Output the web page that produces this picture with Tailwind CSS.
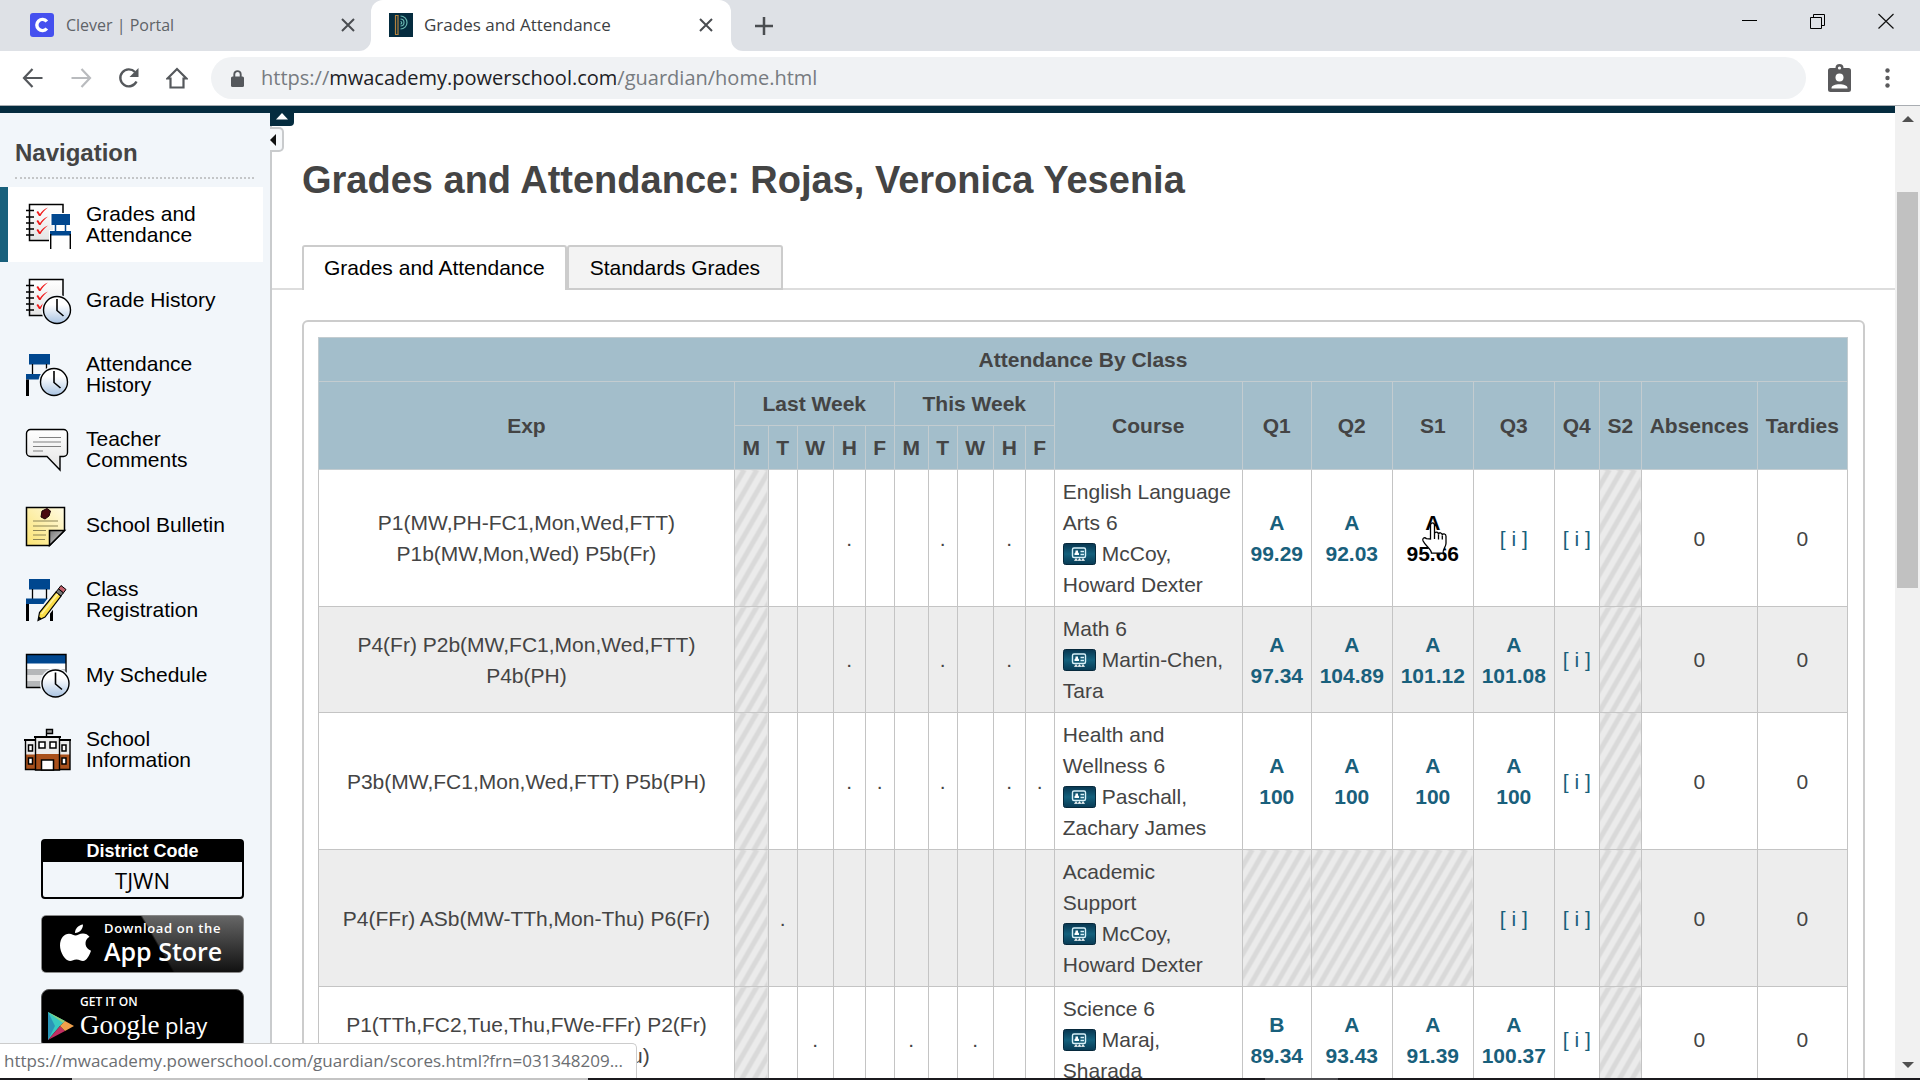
<!DOCTYPE html>
<html lang="en">
<head>
<meta charset="utf-8">
<title>Grades and Attendance</title>
<script src="https://cdn.jsdelivr.net/npm/@tailwindcss/browser@4"></script>
</head>
<body class="flex h-screen flex-col overflow-hidden bg-white font-['Liberation_Sans',Arial,sans-serif] text-[21px] text-[#444]">

<svg class="absolute size-0" aria-hidden="true">
  <defs>
    <linearGradient id="face" x1="0" y1="0" x2="0" y2="1"><stop offset=".3" stop-color="#fff"/><stop offset="1" stop-color="#a9c3e2"/></linearGradient>
    <linearGradient id="paper" x1="0" y1="0" x2="0" y2="1"><stop offset="0" stop-color="#fff"/><stop offset="1" stop-color="#e4e4e4"/></linearGradient>
    <linearGradient id="note" x1="1" y1="0" x2="0" y2="1"><stop offset="0" stop-color="#fffbe4"/><stop offset="1" stop-color="#fbe372"/></linearGradient>
    <linearGradient id="curl" x1="0" y1="0" x2="1" y2="1"><stop offset="0" stop-color="#777"/><stop offset="1" stop-color="#ddd"/></linearGradient>
    <linearGradient id="badge" x1="0" y1="0" x2="0" y2="1"><stop offset="0" stop-color="#083650"/><stop offset=".5" stop-color="#14607c"/><stop offset="1" stop-color="#083a54"/></linearGradient>
    <symbol id="clock" viewBox="0 0 32 32">
      <circle cx="16" cy="16" r="15.5" fill="#f2f6fa"/>
      <circle cx="16" cy="16" r="13.5" fill="url(#face)" stroke="#000" stroke-width="1.4"/>
      <path d="M16 5v11.500l6.500 5.500" fill="none" stroke="#000" stroke-width="1.600"/>
    </symbol>
    <symbol id="notebook" viewBox="0 0 48 50">
      <path d="M5.500 4.500h33.500v36h-33.500z" fill="url(#paper)" stroke="#000" stroke-width="1.500"/>
      <path d="M2 10.500h8M2 17h8M2 23h8M2 29h8M2 35h8" stroke="#000" stroke-width="1.500"/>
      <path id="ck" d="M12.500 12l1.500-1 2 3c2-3 4-5 8-6.500-3.500 2.500-5.500 5-7.500 8.500h-1.500z" fill="#f01818"/>
      <use href="#ck" y="9"/><use href="#ck" y="18"/>
    </symbol>
    <symbol id="portrait" viewBox="0 0 33 22">
      <rect x=".5" y=".5" width="32" height="21" rx="2" fill="url(#badge)" stroke="#06293c"/>
      <rect x="9.500" y="5" width="13" height="9.500" rx="1.500" fill="none" stroke="#d9f2fa" stroke-width="1.400"/>
      <path d="M11.500 12v-1.500l1-1.200v-1.800h2.500v1.800l1 1.200v1.500z" fill="#fff"/>
      <path d="M17.500 8.500h3.500M17.500 11.500h3.500" stroke="#d9f2fa" stroke-width="1.400"/>
      <path d="M11.500 17.500l1.500-2 1.500 2zM15 17.500l1.500-2 1.500 2zM18.500 17.500l1.500-2 1.500 2z" fill="#fff" stroke="#fff" stroke-width=".6"/>
    </symbol>
  </defs>
</svg>

<!-- Tab strip -->
<header class="shrink-0 font-['Open_Sans','Noto_Sans',sans-serif]">
  <div class="flex h-[51px] items-stretch bg-[#dee1e6]">
    <div class="flex w-[371px] items-center pb-[2px] pl-[30px] pr-[13px] text-[16px] text-[#5f6368]">
      <svg class="size-6" viewBox="0 0 24 24"><rect width="24" height="24" rx="3" fill="#4550ef"/><path d="M16.800 8.500A5.600 5.600 0 1 0 16.800 15.500" fill="none" stroke="#fff" stroke-width="3.400"/></svg>
      <span class="ml-3 flex-1">Clever | Portal</span>
      <button class="p-[3px]" aria-label="Close tab"><svg class="size-[14px]" viewBox="0 0 14 14"><path d="M1 1l12 12M13 1L1 13" stroke="#4a4d51" stroke-width="2"/></svg></button>
    </div>
    <div class="relative flex w-[360px] items-center rounded-t-xl bg-white pb-[2px] pl-[18px] pr-[15px] text-[17px] text-[#3c4043]">
      <svg class="absolute -left-3 bottom-0 size-3" viewBox="0 0 12 12"><path d="M12 0v12H0A12 12 0 0 0 12 0z" fill="#fff"/></svg>
      <svg class="absolute -right-3 bottom-0 size-3" viewBox="0 0 12 12"><path d="M0 0v12h12A12 12 0 0 1 0 0z" fill="#fff"/></svg>
      <svg class="size-6" viewBox="0 0 24 24"><path d="M0 0h24v24H0z" fill="#052c3f"/><path d="M6.500 2.500v19M9 21.500v-19" stroke="#b3813d" stroke-width="1.200"/><path d="M6 2.500h3.500M6 21.500h3.500" stroke="#b3813d"/><path d="M11.500 3a6.500 6.500 0 0 1 0 13M11.500 6a3.500 3.500 0 0 1 0 7M11.500 8.500a1.200 1.200 0 0 1 0 2.500" fill="none" stroke="#69b7b0" stroke-width="1.200"/></svg>
      <span class="ml-[11px] flex-1 whitespace-nowrap">Grades and Attendance</span>
      <button class="p-[3px]" aria-label="Close tab"><svg class="size-[14px]" viewBox="0 0 14 14"><path d="M1 1l12 12M13 1L1 13" stroke="#4a4d51" stroke-width="2"/></svg></button>
    </div>
    <button class="ml-6 self-center" aria-label="New tab"><svg class="size-[18px]" viewBox="0 0 18 18"><path d="M9 0v18M0 9h18" stroke="#4a4d51" stroke-width="2.500"/></svg></button>
    <div class="ml-auto flex items-start gap-[52px] pr-[26px] pt-[13px]">
      <button aria-label="Minimize"><svg class="size-4" viewBox="0 0 16 16"><path d="M0 7.500h15" stroke="#000"/></svg></button>
      <button aria-label="Restore"><svg class="size-4" viewBox="0 0 16 16"><path d="M.5 4.500h11v11H.5zM3.500 4V1.500h11v11H12" fill="none" stroke="#000"/></svg></button>
      <button aria-label="Close window"><svg class="size-4" viewBox="0 0 16 16"><path d="M.5 1l15 14.500M15.500 1l-15 14.500" stroke="#111" stroke-width="1.200"/></svg></button>
    </div>
  </div>
  <div class="flex h-[55px] items-center border-b border-[#a9adb2] pl-[22px] pr-[30px]">
    <button aria-label="Back"><svg class="size-[22px]" viewBox="0 0 22 22"><path d="M20.500 11H2.500M10.500 2L2 11l8.500 9" fill="none" stroke="#55585c" stroke-width="2.200"/></svg></button>
    <button class="ml-[26px]" aria-label="Forward"><svg class="size-[22px]" viewBox="0 0 22 22"><path d="M1.500 11h18M11.500 2l8.500 9-8.500 9" fill="none" stroke="#b9bbbe" stroke-width="2.200"/></svg></button>
    <button class="ml-[26px]" aria-label="Reload"><svg class="size-[22px]" viewBox="0 0 22 22"><path d="M18.500 14.500A8.500 8.500 0 1 1 17 5" fill="none" stroke="#55585c" stroke-width="2.400"/><path d="M20.500 1v9h-9z" fill="#55585c"/></svg></button>
    <button class="ml-[26px]" aria-label="Home"><svg class="size-[22px]" viewBox="0 0 22 22"><path d="M1.500 11.500L11 2l9.500 9.500H17.500V20.500h-13v-9z" fill="none" stroke="#55585c" stroke-width="2.200"/></svg></button>
    <div class="ml-[23px] flex h-[42px] flex-1 items-center rounded-full bg-[#f0f2f4] pl-[20px] text-[20px]">
      <svg class="h-[17px] w-[13px]" viewBox="0 0 13 17"><path d="M3.300 7V4.300a3.200 3.200 0 0 1 6.400 0V7" fill="none" stroke="#55585c" stroke-width="1.900"/><rect y="6.500" width="13" height="10.500" rx="1.500" fill="#55585c"/></svg>
      <span role="textbox" aria-label="Address" contenteditable="true" class="ml-[17px] whitespace-nowrap text-[#777b80]">https://<span class="text-[#202124]">mwacademy.powerschool.com</span>/guardian/home.html</span>
    </div>
    <button class="ml-[22px]" aria-label="Profile"><svg class="h-7 w-[23px]" viewBox="0 0 23 28"><path d="M2.500 4H20.500a2.500 2.500 0 0 1 2.500 2.500v19a2.500 2.500 0 0 1-2.500 2.500H2.500A2.500 2.500 0 0 1 0 25.500v-19A2.500 2.500 0 0 1 2.500 4z" fill="#5a5a5c"/><circle cx="11.500" cy="4" r="4" fill="#5a5a5c"/><circle cx="11.500" cy="4" r="1.600" fill="#fff"/><circle cx="11.500" cy="13.500" r="4" fill="#fff"/><path d="M3.500 24c0-5 16-5 16 0v.5h-16z" fill="#fff"/></svg></button>
    <button class="ml-[34px]" aria-label="Menu"><svg class="h-5 w-[5px]" viewBox="0 0 5 20"><g fill="#5a5a5c"><circle cx="2.500" cy="2.500" r="2.200"/><circle cx="2.500" cy="10" r="2.200"/><circle cx="2.500" cy="17.500" r="2.200"/></g></svg></button>
  </div>
</header>

<div class="flex min-h-0 flex-1">
  <div class="relative flex min-w-0 flex-1 flex-col overflow-hidden">
    <div class="h-[7px] shrink-0 bg-[#052c3f]"></div>
    <div class="flex min-h-0 flex-1">

      <!-- Sidebar -->
      <nav class="relative w-[272px] shrink-0 border-r-2 border-[#c9cbcd] bg-[#f2f6fa] text-black">
        <h2 class="ml-[15px] mr-4 mt-[25px] border-b-2 border-dotted border-[#c4c6c8] pb-[9px] text-[24px] leading-[30px] font-bold text-[#444]">Navigation</h2>
        <ul class="mt-2 leading-[21px]">
          <li><a href="#" aria-current="page" class="mr-[7px] flex h-[75px] items-center border-l-8 border-[#19607c] bg-white pl-4 pr-14">
            <svg class="h-[50px] w-12 shrink-0" viewBox="0 0 48 50"><use href="#notebook"/><path d="M26 13h22v12h-1v5h1v20H25V30h4v-5h-3z" fill="#fff"/><path d="M27.500 14h18.500v11H27.500z" fill="#00478f"/><path d="M31.500 25v6M41.500 25v6" stroke="#00478f" stroke-width="1.500"/><path d="M26 31h21v4.500H26z" fill="#00478f"/><path d="M26.700 34v15M46.300 34v15" stroke="#000" stroke-width="1.400"/></svg>
            <span class="ml-[14px] pb-[2px]">Grades and Attendance</span></a></li>
          <li><a href="#" class="flex h-[75px] items-center pl-6 pr-6">
            <svg class="h-[50px] w-12 shrink-0" viewBox="0 0 48 50"><use href="#notebook"/><use href="#clock" x="17" y="19" width="32" height="32"/></svg>
            <span class="ml-[14px]">Grade History</span></a></li>
          <li><a href="#" class="flex h-[75px] items-center pl-6 pr-14">
            <svg class="h-[50px] w-12 shrink-0" viewBox="0 0 48 50"><path d="M5 4h21v10.500H5z" fill="#00478f"/><path d="M8.500 14v10M22.500 14v10" stroke="#000" stroke-width="1.300"/><path d="M2 24h18v5.500H2z" fill="#00478f"/><path d="M2 29.500h3V46H2z"/><use href="#clock" x="14" y="16" width="32" height="32"/></svg>
            <span class="ml-[14px] pb-[2px]">Attendance History</span></a></li>
          <li><a href="#" class="flex h-[75px] items-center pl-6 pr-14">
            <svg class="h-[50px] w-12 shrink-0" viewBox="0 0 48 50"><path d="M6.500 4.500h33a4 4 0 0 1 4 4v19a4 4 0 0 1-4 4h-3.500V45L23 31.500H6.500a4 4 0 0 1-4-4v-19a4 4 0 0 1 4-4z" fill="url(#paper)" stroke="#000" stroke-width="1.400"/><path d="M15 12.500h22M9 17h28M9 21.500h28M9 26h10" stroke="#808080" stroke-width="1.200"/></svg>
            <span class="ml-[14px] pb-[2px]">Teacher Comments</span></a></li>
          <li><a href="#" class="flex h-[75px] items-center pl-6 pr-6">
            <svg class="h-[50px] w-12 shrink-0" viewBox="0 0 48 50"><path d="M2.500 7.500h38v23l-15 15h-23z" fill="url(#note)" stroke="#000" stroke-width="1.500"/><path d="M25.500 45.500v-15h15z" fill="url(#curl)" stroke="#000" stroke-width="1.500"/><path d="M9 21h25M9 26h25M9 30.500h13M9 35h13M9 39.500h12" stroke="#8c8455" stroke-width="1.200"/><path d="M18 11l5-2.500 3.500 2.500-1.500 5-4 3-4-2z" fill="#4a0a10" stroke="#1c0306"/></svg>
            <span class="ml-[14px]">School Bulletin</span></a></li>
          <li><a href="#" class="flex h-[75px] items-center pl-6 pr-14">
            <svg class="h-[50px] w-12 shrink-0" viewBox="0 0 48 50"><path d="M5 4h21v10.500H5z" fill="#00478f"/><path d="M8.500 14v10M22.500 14v10" stroke="#000" stroke-width="1.300"/><path d="M2 23.500h22v5.500H2z" fill="#00478f"/><path d="M2 29h3v17H2zM26 29h3v17h-3z"/><path d="M14 45.500l1.500-8L31 17l6 4-16 21z" fill="#fadc45" stroke="#f2f6fa" stroke-width="4"/><path d="M14 45.500l1.500-8L32 17l5 4-16 21z" fill="#fadc45" stroke="#000" stroke-width="1.200"/><path d="M17.500 39L34 18.500" stroke="#fff2a0" stroke-width="1.500"/><path d="M14 45.500l.8-4 3 2z"/><path d="M32 17l2.500-3.200 5 4L37 21z" fill="#777" stroke="#000"/><path d="M34.500 13.800l2.500-3.300 5 4-2.500 3.300z" fill="#c4616d" stroke="#000"/></svg>
            <span class="ml-[14px] pb-[2px]">Class Registration</span></a></li>
          <li><a href="#" class="flex h-[75px] items-center pl-6 pr-6">
            <svg class="h-[50px] w-12 shrink-0" viewBox="0 0 48 50"><path d="M2.500 4.500h39.500v33H2.500z" fill="#fff"/><path d="M3 19h38v6H3zM3 31h38v6H3z" fill="#b5b7b9"/><path d="M3 25h38v6H3z" fill="#e8e8e8"/><path d="M3 5h39v8.500H3z" fill="#00478f"/><path d="M2.500 4.500h39.500v33H2.500z" fill="none" stroke="#000" stroke-width="1.400"/><use href="#clock" x="15.500" y="17.500" width="32" height="32"/></svg>
            <span class="ml-[14px]">My Schedule</span></a></li>
          <li><a href="#" class="flex h-[75px] items-center pl-6 pr-14">
            <svg class="h-[50px] w-12 shrink-0" viewBox="0 0 48 50"><path d="M22.500 12V4.500h6v4h-6" fill="#999" stroke="#000" stroke-width="1.400"/><path d="M1.500 15h44.500v29.500H1.500z" fill="#ececec"/><path d="M1.500 29.500h44.500v15H1.500z" fill="#a9511c"/><path d="M1.500 15h44.500v29.500H1.500z" fill="none" stroke="#000" stroke-width="1.400"/><path d="M11.500 12h24v33h-24z" fill="#ececec"/><path d="M11.500 29h24v16h-24z" fill="#a9511c"/><path d="M11.500 12h24v33h-24z" fill="none" stroke="#000" stroke-width="1.400"/><path d="M10 12h27M0 15h11M36 15h11" stroke="#000" stroke-width="2"/><g fill="#fff" stroke="#000" stroke-width="1.500"><path d="M15 17h6v6h-6zM26 17h6v6h-6zM4.500 20h4v6h-4zM38 20h4v6h-4zM4.500 33h4v6h-4zM38 33h4v6h-4zM17.500 35h12v10h-12z"/></g></svg>
            <span class="ml-[14px] pb-[2px]">School Information</span></a></li>
        </ul>
        <div class="mt-[52px] flex flex-col gap-4 pl-[41px] pr-[26px]">
          <div class="h-[60px] rounded-[4px] border-2 border-black text-center">
            <div class="bg-black text-[18px] leading-[21px] font-bold text-white">District Code</div>
            <div class="font-['Open_Sans',sans-serif] text-[22px] leading-[36px]">TJWN</div>
          </div>
          <a href="#" class="flex h-[58px] items-center rounded-[5px] border border-[#8a8a8a] bg-[linear-gradient(60deg,#000_56%,transparent_57%),linear-gradient(#666,#111)] pl-[17px] font-['Open_Sans',sans-serif] text-white">
            <svg class="h-10 w-8 shrink-0" viewBox="0 0 32 40"><path d="M16.500 11.500c2 0 4-2 7.500-2 2.500 0 5 1.200 6.500 3.300-6 3.500-5 11.500 1.500 14-1.500 4.500-4.500 10.200-8 10.200-2.500 0-3.500-1.500-6.500-1.500s-4 1.500-6.500 1.500C6 37 1 28 1 21.500 1 14 5.500 9.700 10 9.700c3 0 5 1.800 6.500 1.800z" fill="#fff"/><path d="M16 9c0-4.500 3.500-8 8-8.500 0 4.500-3.500 8.500-8 8.500z" fill="#fff"/></svg>
            <span class="ml-[13px] whitespace-nowrap"><span class="block text-[13px] leading-[14px] font-semibold tracking-wider">Download on the</span><span class="block text-[25px] leading-[32px] font-semibold">App Store</span></span>
          </a>
          <a href="#" class="flex h-[60px] rounded-[8px] border border-[#555] bg-black pl-[6px] pt-[5px] font-['Open_Sans',sans-serif] text-white">
            <svg class="mt-[17px] h-7 w-[26px] shrink-0" viewBox="0 0 26 28"><path d="M0 0l17 9-5 5L0 28z" fill="#38c9c0"/><path d="M0 0v28L7 14z" fill="#2a96b8"/><path d="M0 28l12-14 5 5z" fill="#c22f63"/><path d="M12 14l5-5 9 5-9 5z" fill="#f0a04b"/><path d="M0 0l17 9-2 2z" fill="#8fd07c"/></svg>
            <span class="ml-[6px] whitespace-nowrap"><span class="block text-[12px] leading-[14px] font-semibold">GET IT ON</span><span class="block leading-[32px]"><span class="font-['Liberation_Serif'] text-[27px]">Google</span> <span class="text-[22px]">play</span></span></span>
          </a>
        </div>
        <button class="absolute -right-[24px] top-0 flex h-[13px] w-6 items-start justify-center rounded-br-[4px] bg-[#052c3f]" aria-label="Collapse header"><svg class="h-[7px] w-3" viewBox="0 0 12 7"><path d="M6 0l6 6.500H0z" fill="#fff"/></svg></button>
        <button class="absolute -right-[14px] top-[14px] flex h-[25px] w-[14px] items-center rounded-r-[5px] border-2 border-l-0 border-[#c9cbcd] bg-[#f6f8fa]" aria-label="Collapse navigation"><svg class="h-3 w-[6px]" viewBox="0 0 6 12"><path d="M6 0v12L0 6z" fill="#111"/></svg></button>
      </nav>

      <!-- Main content -->
      <main class="min-w-0 flex-1">
        <h1 class="ml-[30px] mt-[43px] text-[38px] leading-[48px] font-bold">Grades and Attendance: Rojas, Veronica Yesenia</h1>
        <ul class="mt-[41px] flex items-stretch text-black">
          <li class="w-[30px] border-b-2 border-[#ddd]"></li>
          <li><a href="#" class="block h-[45px] rounded-t-[3px] border-2 border-b-0 border-[#ccc] px-5 leading-[41px]">Grades and Attendance</a></li>
          <li><a href="#" class="block h-[45px] rounded-t-[3px] border-2 border-[#ccc] bg-[#f3f3f3] px-[21px] leading-[41px]">Standards Grades</a></li>
          <li class="flex-1 border-b-2 border-[#ddd]"></li>
        </ul>
        <section class="mx-[30px] mt-[30px] h-[900px] rounded-[6px] border-2 border-[#ccc] p-[15px] pl-[14px]">
          <table class="w-full table-fixed border-collapse leading-[31px]">
            <colgroup>
              <col>
              <col class="w-[34px]"><col class="w-[29px]"><col class="w-[36px]"><col class="w-[32px]"><col class="w-[29px]">
              <col class="w-[34px]"><col class="w-[29px]"><col class="w-[36px]"><col class="w-[32px]"><col class="w-[29px]">
              <col class="w-[188px]">
              <col class="w-[69px]"><col class="w-[81px]"><col class="w-[81px]"><col class="w-[81px]"><col class="w-[45px]"><col class="w-[42px]">
              <col class="w-[116px]"><col class="w-[90px]">
            </colgroup>
            <thead class="bg-[#a3becb]" id="head"></thead>
            <tbody id="rows"></tbody>
          </table>
        </section>
      </main>
    </div>
  </div>

  <!-- Page scrollbar -->
  <div class="flex w-[25px] shrink-0 flex-col items-center bg-[#f1f1f1]">
    <svg class="mt-[10px] h-[6px] w-3 shrink-0" viewBox="0 0 12 6"><path d="M6 0l6 6H0z" fill="#505050"/></svg>
    <div class="mt-[70px] h-[396px] w-[21px] bg-[#c1c1c1]"></div>
    <svg class="mb-[10px] mt-auto h-[6px] w-3 shrink-0" viewBox="0 0 12 6"><path d="M0 0h12L6 6z" fill="#505050"/></svg>
  </div>
</div>

<!-- Link status bubble -->
<div class="absolute bottom-[2px] left-0 h-[35px] w-[637px] rounded-tr-[5px] border-t border-r border-[#ccc] bg-white pl-1 font-['Open_Sans','Noto_Sans',sans-serif] text-[17px] leading-[34px] whitespace-nowrap text-[#6b6e72]">https://mwacademy.powerschool.com/guardian/scores.html?frn=031348209...</div>

<!-- Taskbar edge -->
<footer class="flex h-[2px] shrink-0 bg-[#1b1a1e]"><div class="ml-[72px] w-[516px] bg-[#c4c4c4]"></div><div class="ml-[677px] w-[73px] bg-[#4a4a4e]"></div></footer>

<script>
const th = (text, attrs = '') => `<th ${attrs} class="border border-[#c3ccd0] p-0 py-[6px] text-center font-bold">${text}</th>`;
document.getElementById('head').innerHTML =
  `<tr>${th('Attendance By Class', 'colspan="20"')}</tr>` +
  `<tr>${th('Exp', 'rowspan="2"')}${th('Last Week', 'colspan="5"')}${th('This Week', 'colspan="5"')}` +
  ['Course', 'Q1', 'Q2', 'S1', 'Q3', 'Q4', 'S2', 'Absences', 'Tardies'].map(t => th(t, 'rowspan="2"')).join('') + '</tr>' +
  `<tr>${[...'MTWHFMTWHF'].map(d => th(d)).join('')}</tr>`;

// x = no class scheduled, i = info link only, otherwise "letter score"
const classes = [
  { exp: 'P1(MW,PH-FC1,Mon,Wed,FTT)<br>P1b(MW,Mon,Wed) P5b(Fr)', days: 'x--.--.-.-', course: 'English Language<br>Arts 6', who: ['McCoy,', 'Howard Dexter'], grades: ['A 99.29', 'A 92.03', 'A 95.66', 'i', 'i', 'x'], hover: 2 },
  { exp: 'P4(Fr) P2b(MW,FC1,Mon,Wed,FTT)<br>P4b(PH)', days: 'x--.--.-.-', course: 'Math 6', who: ['Martin-Chen,', 'Tara'], grades: ['A 97.34', 'A 104.89', 'A 101.12', 'A 101.08', 'i', 'x'] },
  { exp: 'P3b(MW,FC1,Mon,Wed,FTT) P5b(PH)', days: 'x--..-.-..', course: 'Health and<br>Wellness 6', who: ['Paschall,', 'Zachary James'], grades: ['A 100', 'A 100', 'A 100', 'A 100', 'i', 'x'] },
  { exp: 'P4(FFr) ASb(MW-TTh,Mon-Thu) P6(Fr)', days: 'x.--------', course: 'Academic<br>Support', who: ['McCoy,', 'Howard Dexter'], grades: ['x', 'x', 'x', 'i', 'i', 'x'] },
  { exp: 'P1(TTh,FC2,Tue,Thu,FWe-FFr) P2(Fr)<br>P1b(TTh,Tue) P2b(M,Thu)', days: 'x-.--.-.--', course: 'Science 6', who: ['Maraj,', 'Sharada'], grades: ['B 89.34', 'A 93.43', 'A 91.39', 'A 100.37', 'i', 'x'] },
];
const hatch = '<td class="border border-[#c4c4c4] bg-[repeating-linear-gradient(120deg,#ebebeb_0px,#ebebeb_5px,#d9d9d9_6px,#d9d9d9_10px,#ebebeb_11px)]"></td>';
const td = inner => `<td class="border border-[#c4c4c4] p-0 py-[6px] text-center">${inner}</td>`;
const hand = '<svg class="absolute left-[28px] top-[52px] h-[32px] w-[27px]" viewBox="0 0 27 32"><path d="M9.500 17V3.200c0-3 4-3 4 0V12c0-2.500 4-2.500 4 .5 0-2.500 3.800-2.300 3.800.7 0-2 3.700-2 3.700 1v7c0 4-3 5-3 10H10.500c0-4-6-7-8.500-12.500-1-2.500 1.500-4 3.500-2z" fill="#fff" stroke="#000" stroke-width="1.300"/><path d="M13.500 12v5M17.500 12.500v5M21.300 13.500v4" stroke="#000" stroke-width="1.300"/></svg>';
function grade(g, hovered) {
  if (g === 'x') return hatch;
  if (g === 'i') return td('<a href="#" class="text-[#19607c]">[ i ]</a>');
  const text = g.replace(' ', '<br>');
  return hovered
    ? `<td class="relative border border-[#c4c4c4] p-0 py-[6px] text-center"><a href="#" class="font-bold text-black">${text}</a>${hand}</td>`
    : td(`<a href="#" class="font-bold text-[#19607c]">${text}</a>`);
}
document.getElementById('rows').innerHTML = classes.map(c =>
  `<tr class="even:bg-[#ededed]">${td(c.exp)}` +
  [...c.days].map(d => d === 'x' ? hatch : td(d === '.' ? '.' : '')).join('') +
  `<td class="border border-[#c4c4c4] py-[6px] pl-2 pr-0">${c.course}<br><a href="#" aria-label="Teacher details"><svg class="mr-[6px] inline-block h-[22px] w-[33px] align-[-4px]"><use href="#portrait"/></svg></a>${c.who[0]}<br>${c.who[1]}</td>` +
  c.grades.map((g, i) => grade(g, c.hover === i)).join('') + td('0') + td('0') + '</tr>').join('');
</script>
</body>
</html>
